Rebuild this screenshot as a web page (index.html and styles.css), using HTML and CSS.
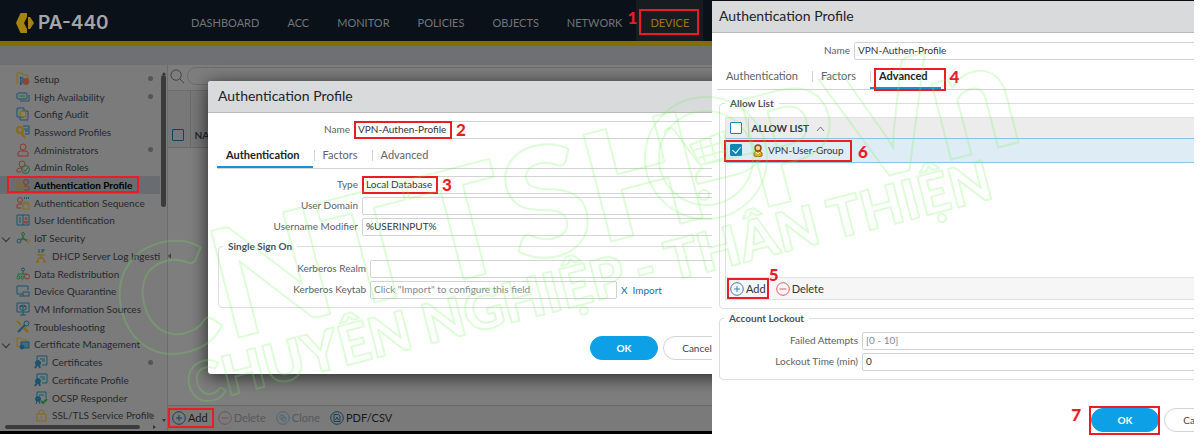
FILE: index.html
```html
<!DOCTYPE html>
<html lang="en">
<head>
  <meta charset="UTF-8" />
  <meta name="viewport" content="width=device-width, initial-scale=1.0"/>
  <title>PA-440 - Authentication Profile</title>
  <link rel="stylesheet" href="styles.css">
</head>
<body>
  <svg class="sprite" aria-hidden="true">
    <symbol id="i-setup" viewBox="0 0 14 14"><path d="M1 12V1h5l1 2h5v4" stroke="#8a6a14"/><path d="M4 12l1-4-1-3 3 1v3l-2 4z" stroke="#1b5470" fill="#3e7390"/><circle cx="10" cy="9.500" r="3" fill="#8d4636" stroke="#8d4636"/></symbol>
    <symbol id="i-ha" viewBox="0 0 14 14"><rect x="1" y="3" width="10" height="6" rx="1" stroke="#1b5470"/><path d="M4 11h9V5" stroke="#1b5470"/><path d="M3 6h6" stroke="#2c6e3c"/></symbol>
    <symbol id="i-audit" viewBox="0 0 14 14"><path d="M1 1h7v9H1zM6 4h6v9H4v-3" stroke="#1b5470"/><circle cx="7" cy="7" r="3" fill="#858270" stroke="#8a6a14"/><path d="M9 9l4 4" stroke="#8a6a14"/></symbol>
    <symbol id="i-pass" viewBox="0 0 14 14"><circle cx="4" cy="5" r="3" stroke="#8a6a14" stroke-width="2"/><path d="M5 8l4 5M8 9l-2 2" stroke="#8a6a14" stroke-width="2"/><path d="M7 1h6v8H9M8 4h4M9 6h3" stroke="#1b5470"/></symbol>
    <symbol id="i-admin" viewBox="0 0 14 14"><circle cx="7" cy="4" r="3" stroke="#8b3a2c"/><path d="M2 13v-3q0-2 3-2h4q3 0 3 2v3z" stroke="#8b3a2c"/></symbol>
    <symbol id="i-roles" viewBox="0 0 14 14"><circle cx="6" cy="4" r="3" stroke="#8b3a2c"/><path d="M1 12v-2q0-2 3-2h3" stroke="#8b3a2c"/><path d="M1 12h4" stroke="#8b3a2c"/><circle cx="9.500" cy="9.500" r="4" stroke="#1f6a38"/><path d="M7.500 9.500l1.500 2 3-4" stroke="#1f6a38"/></symbol>
    <symbol id="i-auth" viewBox="0 0 14 14"><rect x="1" y="6" width="6" height="6" stroke="#8a6a14"/><path d="M2 6V3h4v3M4 8v2" stroke="#8a6a14"/><circle cx="10" cy="4" r="2.500" stroke="#8b3a2c"/><path d="M8 8h3q2 0 2 2v2H8" stroke="#8b3a2c"/></symbol>
    <symbol id="i-seq" viewBox="0 0 14 14"><circle cx="4" cy="4" r="2.500" stroke="#8b3a2c"/><path d="M1 12V9l2-1h3M1 12h4" stroke="#8b3a2c"/><rect x="7" y="8" width="6" height="5" stroke="#8a6a14"/><path d="M8 8V6h4v2" stroke="#8a6a14"/><path d="M8 2h1M10 2h1M12 2h1" stroke="#1b5470" stroke-width="2"/></symbol>
    <symbol id="i-userid" viewBox="0 0 14 14"><path d="M1 2h12v10H1zM7 2v10M3 5h2M3 7h2M3 9h2" stroke="#1b5470"/><circle cx="10" cy="5.500" r="1" stroke="#8b3a2c"/><path d="M8.500 10V8.500h3V10z" stroke="#8b3a2c"/></symbol>
    <symbol id="i-iot" viewBox="0 0 14 14"><circle cx="7" cy="3" r="1.500" stroke="#1f6a38"/><circle cx="3" cy="10" r="2" stroke="#1b5470"/><circle cx="11.500" cy="10" r="1.500" stroke="#8a6a14"/><path d="M7 4.500v3L4 9M7 7.500l4 2" stroke="#1f6a38" stroke-width="1.500"/></symbol>
    <symbol id="i-dhcp" viewBox="0 0 14 14"><path d="M5 0v4M8 4V0h2v2H8" stroke="#1b5470"/><path d="M3 6h8M7 6v3M4 9h6M5 9l-2 4M9 9l2 4M2 13h3M9 13h3" stroke="#8a6a14" stroke-width="1.500"/></symbol>
    <symbol id="i-data" viewBox="0 0 14 14"><circle cx="7" cy="2.500" r="1.500" stroke="#1b5470"/><path d="M7 4v3M2 9V7h9" stroke="#1f6a38"/><circle cx="2.500" cy="10.500" r="1.500" stroke="#1f6a38"/><circle cx="6.500" cy="10.500" r="1.500" stroke="#1f6a38"/><circle cx="11" cy="9.500" r="2.500" stroke="#8b3a2c"/></symbol>
    <symbol id="i-quar" viewBox="0 0 14 14"><path d="M12 6V2H1v8h6M3 12h4" stroke="#1b5470"/><rect x="7" y="8" width="6" height="4" stroke="#1b5470"/></symbol>
    <symbol id="i-vm" viewBox="0 0 14 14"><path d="M1 1h12v9H1zM4 13h6M7 10v3" stroke="#1b5470"/><path d="M7 3l3 1v3L7 9 4 7V4zM4 4l3 1 3-1M7 5v4" stroke="#1b5470"/></symbol>
    <symbol id="i-trouble" viewBox="0 0 14 14"><path d="M2 12l7-7" stroke="#1b5470" stroke-width="2"/><circle cx="10.500" cy="3.500" r="2.500" stroke="#1b5470"/><path d="M1 1l4 4" stroke="#8a6a14" stroke-width="2"/><path d="M8 8l4 4" stroke="#8a6a14" stroke-width="3"/></symbol>
    <symbol id="i-certs" viewBox="0 0 14 14"><path d="M4 10H1V1h4l1 2h5v2" stroke="#8a6a14"/><rect x="5" y="5" width="8" height="6" stroke="#1b5470" fill="#3e6c84"/><circle cx="6" cy="10" r="2" fill="#1b5470" stroke="#1b5470"/></symbol>
    <symbol id="i-cert" viewBox="0 0 14 14"><path d="M3 6V1h10v9H8M6 4h5M8 6h3" stroke="#1b5470"/><circle cx="4" cy="8" r="2.500" fill="#1b5470" stroke="#1b5470"/><path d="M3 10l-2 3M5 10l1 3" stroke="#1b5470" stroke-width="2"/></symbol>
    <symbol id="i-ocsp" viewBox="0 0 14 14"><path d="M3 6V1h9v6M5 4h5" stroke="#1b5470"/><circle cx="4" cy="8" r="2.500" fill="#1b5470" stroke="#1b5470"/><path d="M3 10l-1 3M5 10l1 3" stroke="#1b5470"/><path d="M7 10l2 2 4-4" stroke="#1f6a38" stroke-width="2"/></symbol>
    <symbol id="i-lock" viewBox="0 0 14 14"><rect x="3" y="6" width="9" height="7" stroke="#8a6a14"/><path d="M5 6V4q0-2 2.500-2T10 4v2M7.500 8.500v2" stroke="#8a6a14"/></symbol>
    <symbol id="i-add" viewBox="0 0 14 14"><circle cx="7" cy="7" r="6.300"/><path d="M7 4v6M4 7h6"/></symbol>
    <symbol id="i-minus" viewBox="0 0 14 14"><circle cx="7" cy="7" r="6.300"/><path d="M3.500 7h7"/></symbol>
    <symbol id="i-clone" viewBox="0 0 14 14"><circle cx="7" cy="7" r="6.300"/><rect x="4" y="4" width="4" height="4" rx="1"/><rect x="6" y="6" width="4" height="4" rx="1"/></symbol>
    <symbol id="i-pdf" viewBox="0 0 14 14"><circle cx="7" cy="7" r="6.300"/><path d="M4 3.500h4.500L10 5v5.500H4zM5.500 9l1.500-3 1.500 3"/></symbol>
  </svg>

  <div class="page">
    <!-- device console -->
    <section class="console">
      <header class="topbar">
        <svg class="logo" viewBox="0 0 18 20"><path d="M4.500 0H11v4l-3 6 3 6v4H4.500L0 10z" fill="#a58509"/><path d="M12 4h2l4 6-4 6h-2z" fill="#a58509"/></svg>
        <span class="model">PA-440</span>
        <nav class="topnav">
          <a href="#">DASHBOARD</a>
          <a href="#">ACC</a>
          <a href="#">MONITOR</a>
          <a href="#">POLICIES</a>
          <a href="#">OBJECTS</a>
          <a href="#">NETWORK</a>
          <a href="#" class="active">DEVICE<span class="mark mark-device"><b>1</b></span></a>
        </nav>
      </header>
      <div class="strip"></div>
      <div class="workspace">
        <aside class="sidebar">
          <div class="tree-wrap">
            <ul class="tree">
              <li><svg><use href="#i-setup"/></svg>Setup<i class="dot"></i></li>
              <li><svg><use href="#i-ha"/></svg>High Availability<i class="dot"></i></li>
              <li><svg><use href="#i-audit"/></svg>Config Audit</li>
              <li><svg><use href="#i-pass"/></svg>Password Profiles</li>
              <li><svg><use href="#i-admin"/></svg>Administrators<i class="dot"></i></li>
              <li><svg><use href="#i-roles"/></svg>Admin Roles</li>
              <li class="selected"><svg><use href="#i-auth"/></svg>Authentication Profile<span class="mark mark-tree"></span></li>
              <li><svg><use href="#i-seq"/></svg>Authentication Sequence</li>
              <li><svg><use href="#i-userid"/></svg>User Identification</li>
              <li class="open"><svg><use href="#i-iot"/></svg>IoT Security</li>
              <li class="child"><svg><use href="#i-dhcp"/></svg>DHCP Server Log Ingestion</li>
              <li><svg><use href="#i-data"/></svg>Data Redistribution</li>
              <li><svg><use href="#i-quar"/></svg>Device Quarantine</li>
              <li><svg><use href="#i-vm"/></svg>VM Information Sources</li>
              <li><svg><use href="#i-trouble"/></svg>Troubleshooting</li>
              <li class="open"><svg><use href="#i-certs"/></svg>Certificate Management</li>
              <li class="child"><svg><use href="#i-cert"/></svg>Certificates<i class="dot"></i></li>
              <li class="child"><svg><use href="#i-cert"/></svg>Certificate Profile</li>
              <li class="child"><svg><use href="#i-ocsp"/></svg>OCSP Responder</li>
              <li class="child"><svg><use href="#i-lock"/></svg>SSL/TLS Service Profile<i class="dot"></i></li>
            </ul>
            <div class="vscroll"><span class="arrow up"></span><span class="thumb"></span><span class="arrow down"></span></div>
          </div>
          <div class="hscroll"><span class="thumb"></span><span class="arrow right"></span></div>
        </aside>
        <main class="content">
          <div class="search">
            <svg viewBox="0 0 16 16"><circle cx="6.500" cy="6.500" r="5.500"/><path d="M10.500 10.500L15 15"/></svg>
            <input type="text" aria-label="Search">
          </div>
          <table class="profiles">
            <thead><tr><th class="pick"><input type="checkbox" class="check" aria-label="Select all profiles"></th><th>NAME</th></tr></thead>
          </table>
          <span class="splitter"></span>
          <div class="actions">
            <button class="tool"><svg class="blue"><use href="#i-add"/></svg>Add<span class="mark mark-add"></span></button>
            <button class="tool" disabled><svg class="red"><use href="#i-minus"/></svg>Delete</button>
            <button class="tool" disabled><svg class="blue"><use href="#i-clone"/></svg>Clone</button>
            <button class="tool"><svg class="blue"><use href="#i-pdf"/></svg>PDF/CSV</button>
          </div>
        </main>
      </div>

      <div class="dialog floating">
        <h2>Authentication Profile</h2>
        <div class="dialog-body">
          <div class="row row-name">
            <label for="name-a">Name</label>
            <div class="field"><input type="text" id="name-a" value="VPN-Authen-Profile"><span class="mark mark-name"><b>2</b></span></div>
          </div>
          <div class="tabs">
            <button class="tab active">Authentication</button>
            <button class="tab">Factors</button>
            <button class="tab">Advanced</button>
          </div>
          <div class="rows">
            <div class="row">
              <label for="type">Type</label>
              <div class="field"><input type="text" id="type" value="Local Database"><span class="mark mark-type"><b>3</b></span></div>
            </div>
            <div class="row">
              <label for="domain">User Domain</label>
              <div class="field"><input type="text" id="domain"></div>
            </div>
            <div class="row">
              <label for="modifier">Username Modifier</label>
              <div class="field"><input type="text" id="modifier" value="%USERINPUT%"></div>
            </div>
          </div>
          <fieldset class="sso">
            <legend>Single Sign On</legend>
            <div class="rows">
              <div class="row">
                <label for="realm">Kerberos Realm</label>
                <div class="field"><input type="text" id="realm"></div>
              </div>
              <div class="row">
                <label for="keytab">Kerberos Keytab</label>
                <div class="field keytab"><input type="text" id="keytab" placeholder="Click &quot;Import&quot; to configure this field"></div>
                <div class="links"><a href="#">X</a><a href="#">Import</a></div>
              </div>
            </div>
          </fieldset>
          <div class="footer">
            <button class="btn primary">OK</button>
            <button class="btn">Cancel</button>
          </div>
        </div>
      </div>
    </section>

    <!-- advanced tab -->
    <section class="advanced">
      <div class="dialog">
        <h2>Authentication Profile</h2>
        <div class="dialog-body">
          <div class="row row-name">
            <label for="name-b">Name</label>
            <div class="field"><input type="text" id="name-b" value="VPN-Authen-Profile"></div>
          </div>
          <div class="tabs">
            <button class="tab">Authentication</button>
            <button class="tab">Factors</button>
            <button class="tab active">Advanced<span class="mark mark-advanced"><b>4</b></span></button>
          </div>
          <fieldset class="allow">
            <legend>Allow List</legend>
            <div class="grid-box">
              <table>
                <thead>
                  <tr><th class="pick"><input type="checkbox" class="check" aria-label="Select all"></th><th>ALLOW LIST <svg class="sort" viewBox="0 0 9 6"><path d="M1 5l3.500-4L8 5"/></svg></th></tr>
                </thead>
                <tbody>
                  <tr>
                    <td class="pick"><input type="checkbox" class="check" id="group" checked><span class="mark mark-group"><b>6</b></span></td>
                    <td><label for="group"><svg class="user" viewBox="0 0 10 13"><path d="M1 12q-1-4 2-5h4q3 1 2 5-4 1.500-8 0z" fill="#eda52a" stroke="#a9640d"/><circle cx="5" cy="4" r="3" fill="#f6cf91" stroke="#84500f" stroke-width="1.500"/><path d="M3 8l2 2 2-2" stroke="#fff" fill="none"/></svg>VPN-User-Group</label></td>
                  </tr>
                </tbody>
              </table>
              <div class="grid-actions">
                <button class="tool"><svg class="blue"><use href="#i-add"/></svg>Add<span class="mark mark-add-group"><b>5</b></span></button>
                <button class="tool"><svg class="red"><use href="#i-minus"/></svg>Delete</button>
              </div>
            </div>
          </fieldset>
          <fieldset class="lockout">
            <legend>Account Lockout</legend>
            <div class="rows">
              <div class="row">
                <label for="attempts">Failed Attempts</label>
                <div class="field"><input type="text" id="attempts" placeholder="[0 - 10]"></div>
              </div>
              <div class="row">
                <label for="locktime">Lockout Time (min)</label>
                <div class="field"><input type="text" id="locktime" value="0"></div>
              </div>
            </div>
          </fieldset>
          <div class="footer">
            <button class="btn primary">OK<span class="mark mark-ok"><b>7</b></span></button>
            <button class="btn">Cancel</button>
          </div>
        </div>
      </div>
    </section>

    <!-- watermark -->
    <svg class="watermark" viewBox="0 0 1200 438" aria-hidden="true">
      <g transform="translate(160 360) rotate(-14.500)">
        <text class="wm-big" x="-30" y="-2">CNTTSH</text>
        <text class="wm-big" x="616" y="4">PVn</text>
        <text class="wm-small" x="20" y="52">CHUYÊN NGHIỆP - THÂN THIỆN</text>
      </g>
      <circle cx="706" cy="158" r="61"/>
      <circle cx="706" cy="158" r="47"/>
      <path d="M664 133q4-8 10-3l28 38q-10 8-4 16l40-10q14-4 22-14l-4-8-50 12M690 145l34-14 4 26-28 8zM694 150l30-8M698 158l30-8M700 142l5 20M710 138l5 20M719 134l5 20"/>
      <circle cx="704" cy="195" r="5"/>
    </svg>
  </div>
</body>
</html>
```
FILE: styles.css
```css
* {
  box-sizing: border-box;
}

body {
  margin: 0;
  background-color: #fff;
  color: #30363c;
  font-family: Lato, 'Open Sans', sans-serif;
  font-size: 10px;
  line-height: 12px;
}

button, input {
  font: inherit;
  color: inherit;
}

button {
  background: none;
  border: none;
  padding: 0;
}

a {
  text-decoration: none;
}

svg {
  fill: none;
  flex: none;
}

.sprite {
  position: absolute;
  width: 0;
  height: 0;
}

.page {
  position: relative;
  display: grid;
  grid-template-columns: 712fr 482fr;
  min-height: 100vh;
  padding-right: 6px;
  overflow: hidden;
}

/* console */
.console {
  position: relative;
  display: flex;
  flex-direction: column;
  margin-bottom: 4px;
  border-bottom: 3px solid #000;
  background-color: #7e7e7e;
  overflow: hidden;
}

.topbar {
  display: flex;
  align-items: center;
  height: 46px;
  padding-left: 16px;
  background-color: #0b1119;
  border-bottom: 5px solid #8a6b00;
}

.logo {
  width: 18px;
  height: 20px;
  margin-top: 4px;
}

.model {
  width: 125px;
  margin: 4px 0 0 4px;
  font: 600 19px/20px Inter, sans-serif;
  color: #a3a5a8;
}

.topnav {
  display: flex;
  align-self: stretch;
  margin-left: 14px;
  font-size: 11px;
}

.topnav a {
  position: relative;
  padding: 17px 14px 0;
  color: #70757b;
}

.topnav .active {
  background-color: #171c21;
  color: #a07608;
}

.strip {
  height: 19px;
  background-color: #6e7073;
}

.workspace {
  flex: 1;
  display: grid;
  grid-template-columns: 168px 1fr;
}

.sidebar {
  display: flex;
  flex-direction: column;
  border-right: 1px solid #6c6c6c;
  background-color: #7b7b7b;
  color: #24292e;
  min-width: 0;
}

.tree-wrap {
  flex: 1;
  display: flex;
  padding-top: 5px;
}

.tree {
  flex: 1;
  display: flex;
  flex-direction: column;
  margin: 0;
  padding: 0;
  list-style: none;
  min-width: 0;
}

.tree li {
  flex: 1;
  position: relative;
  display: flex;
  align-items: center;
  gap: 4px;
  padding-left: 16px;
  white-space: nowrap;
}

.tree svg {
  width: 14px;
  height: 14px;
}

.tree .child {
  padding-left: 34px;
  overflow: hidden;
}

.tree .selected {
  background-color: #696c70;
  color: #000;
  font-weight: 700;
}

.open::before {
  content: '';
  position: absolute;
  left: 3px;
  width: 5px;
  height: 5px;
  border: solid #333;
  border-width: 0 1px 1px 0;
  transform: rotate(45deg);
}

.dot {
  position: absolute;
  right: 7px;
  width: 5px;
  height: 5px;
  border-radius: 50%;
  background-color: #555;
}

.vscroll {
  width: 7px;
  display: flex;
  flex-direction: column;
  align-items: center;
}

.vscroll .thumb {
  width: 5px;
  height: 132px;
  margin-bottom: auto;
  border-radius: 3px;
  background-color: #3b3b3b;
}

.hscroll {
  display: flex;
  align-items: center;
  justify-content: space-between;
  height: 7px;
  padding: 0 9px 2px 5px;
}

.hscroll .thumb {
  width: 135px;
  height: 4px;
  border-radius: 2px;
  background-color: #3b3b3b;
}

.arrow {
  border: 2px solid transparent;
}

.up {
  border-bottom: 3px solid #333;
}

.down {
  border-top: 3px solid #333;
}

.right {
  border-left: 3px solid #333;
}

.content {
  position: relative;
  display: flex;
  flex-direction: column;
}

.search {
  display: flex;
  align-items: center;
  gap: 2px;
  height: 26px;
  margin-right: -20px;
  padding: 0 0 3px 2px;
  border-bottom: 1px solid #6c6c6c;
}

.search svg {
  width: 15px;
  height: 15px;
  stroke: #3d4043;
}

.search input {
  flex: 1;
  height: 18px;
  border: 1px solid #6c6c6c;
  border-radius: 9px;
  background-color: #7e7e7e;
}

.profiles {
  border-collapse: collapse;
  width: 100%;
  color: #24292e;
}

.profiles th {
  height: 56px;
  padding: 0 5px 6px 4px;
  border-bottom: 1px solid #6a6a6a;
  background-color: #787878;
  text-align: left;
  vertical-align: bottom;
}

.profiles .pick {
  width: 22px;
  padding-left: 4px;
  border-right: 1px solid #6a6a6a;
}

.check {
  appearance: none;
  display: block;
  width: 12px;
  height: 12px;
  margin: 0;
  border: 1px solid #1484b4;
  border-radius: 1px;
  background-color: #fff;
}

.profiles .check {
  border-color: #0d4560;
  background-color: transparent;
}

.check:checked {
  background-color: #0f86b4;
}

.check:checked::after {
  content: '';
  display: block;
  width: 4px;
  height: 7px;
  margin: 0 0 0 3px;
  border: solid #fff;
  border-width: 0 1px 1px 0;
  transform: rotate(40deg);
}

.splitter {
  position: absolute;
  left: 0;
  top: 188px;
  border: 3px solid transparent;
  border-right-color: #444;
  border-left: none;
}

.actions, .grid-actions {
  display: flex;
  align-items: center;
}

.actions {
  gap: 10px;
  height: 26px;
  margin-top: auto;
  padding: 0 0 2px 4px;
  border-top: 1px solid #686868;
  background-color: #7a7a7a;
}

.tool {
  position: relative;
  display: flex;
  align-items: center;
  gap: 2px;
  font-size: 11px;
  line-height: 14px;
}

.tool svg {
  width: 14px;
  height: 14px;
}

.actions .tool {
  color: #16191c;
}

.actions .tool:disabled {
  color: #56595b;
}

.blue {
  stroke: #3c87ad;
}

.red {
  stroke: #d8606a;
}

.actions .blue {
  stroke: #163f57;
}

.actions :disabled .blue {
  stroke: #4e6675;
}

.actions :disabled .red {
  stroke: #705657;
}

/* dialogs */
.dialog {
  background-color: #fff;
}

.floating {
  position: absolute;
  left: 208px;
  right: -29px;
  top: 81px;
  border-radius: 3px;
  box-shadow: 0 3px 18px rgba(0, 0, 0, 0.7);
}

.dialog h2 {
  height: 32px;
  margin: 0;
  padding: 0 10px;
  border-bottom: 1px solid #b8b9bb;
  border-radius: 3px 3px 0 0;
  background-color: #d9dadc;
  font-size: 14px;
  font-weight: 400;
  line-height: 30px;
  color: #202428;
}

.dialog-body {
  padding: 8px 10px 14px 9px;
}

.row {
  display: flex;
  align-items: center;
  gap: 4px;
}

.rows {
  display: flex;
  flex-direction: column;
  gap: 3px;
}

.row label {
  width: 141px;
  padding-bottom: 2px;
  text-align: right;
  color: #5b6167;
}

.row-name label {
  width: 133px;
}

.field {
  position: relative;
  flex: 1;
}

.field input {
  display: block;
  width: 100%;
  height: 18px;
  padding: 0 3px 2px;
  border: 1px solid #d2d3d5;
  border-radius: 2px;
  background-color: #fff;
}

.field input::placeholder {
  color: #85898d;
}

.tabs {
  display: flex;
  margin: 5px 0 7px;
  border-bottom: 1px solid #d2d3d5;
}

.tab {
  position: relative;
  height: 24px;
  padding: 0 13px 2px 9px;
  font-size: 11px;
  color: #5e6369;
}

.tab.active {
  border-bottom: 2px solid #1692cf;
  padding-bottom: 0;
  font-weight: 700;
  color: #202428;
}

.tab:not(:last-child) {
  margin-right: 1px;
}

.tab:not(:first-child)::before {
  content: '';
  position: absolute;
  left: 0;
  top: 6px;
  height: 11px;
  border-left: 1px solid #d2d3d5;
}

fieldset {
  min-width: 0;
  margin: 4px 0 0 1px;
  padding: 8px 6px 8px 0;
  border: 1px solid #dcdddf;
  border-radius: 4px;
}

legend {
  margin-left: 4px;
  padding: 0 5px;
  font-weight: 700;
  line-height: 12px;
  color: #46535f;
}

.sso label {
  width: 147px;
}

.keytab {
  flex: none;
  width: 247px;
}

.links {
  display: flex;
  gap: 5px;
}

.links a {
  color: #1470b0;
}

.footer {
  display: flex;
  justify-content: flex-end;
  gap: 5px;
  padding-top: 28px;
}

.btn {
  position: relative;
  width: 68px;
  height: 24px;
  border: 1px solid #d2d3d5;
  border-radius: 12px;
  background-color: #fff;
  color: #40464c;
}

.btn.primary {
  border-color: #0ea0e6;
  background-color: #0ea0e6;
  color: #fff;
  font-weight: 700;
}

/* advanced panel */
.advanced {
  border-top: 1px solid #0b0d14;
  overflow: hidden;
}

.advanced .dialog {
  margin-right: -48px;
}

.advanced h2 {
  padding: 0 7px;
  border-radius: 0;
}

.advanced .dialog-body {
  padding: 9px 10px 0 5px;
}

.advanced fieldset {
  margin: 0 0 0 2px;
}

.advanced .lockout {
  margin-top: 3px;
}

.advanced .allow {
  padding-left: 5px;
}

.allow legend {
  margin-left: 0;
}

.lockout label {
  width: 138px;
}

.grid-box {
  display: flex;
  flex-direction: column;
  min-height: 183px;
  border: 1px solid #dfe0e1;
}

.grid-box table {
  width: 100%;
  border-collapse: collapse;
}

.grid-box th {
  height: 20px;
  padding: 0 3px;
  background-color: #ececec;
  text-align: left;
}

.grid-box th.pick {
  border-right: 1px solid #cfd0d1;
}

.grid-box td {
  height: 24px;
  padding: 0 6px 0 5px;
  border: solid #8cc4e0;
  border-width: 1px 0;
  background-color: #deecf5;
}

.grid-box .pick {
  position: relative;
  width: 22px;
  padding: 0 4px;
}

.grid-box label {
  display: flex;
  align-items: center;
  gap: 5px;
}

.user {
  width: 10px;
  height: 13px;
}

.sort {
  width: 9px;
  height: 6px;
  margin-left: 5px;
  stroke: #777;
}

.grid-actions {
  gap: 10px;
  height: 22px;
  margin-top: auto;
  padding-left: 4px;
  border-top: 1px solid #e4e4e4;
  background-color: #f6f6f6;
}

/* step marks drawn over the controls */
.mark {
  position: absolute;
  border: 2px solid #ec1c24;
}

.mark b {
  position: absolute;
  top: -2px;
  left: 100%;
  margin-left: 6px;
  font-size: 17px;
  font-weight: 900;
  line-height: 18px;
  color: #ec1c24;
}

.mark-device {
  inset: 9px 4px 6px 3px;
}

.mark-device b {
  left: auto;
  right: 100%;
  margin: 0 4px 0 0;
}

.mark-tree {
  left: 7px;
  top: 0;
  width: 132px;
  height: 17px;
}

.mark-add {
  inset: -3px -6px -3px -4px;
}

.mark-name {
  left: 0;
  top: 0;
  width: 98px;
  height: 18px;
}

.mark-type {
  left: 0;
  top: 0;
  width: 76px;
  height: 18px;
}

.mark-advanced {
  inset: 3px -5px -4px 4px;
}

.mark-group {
  left: -2px;
  top: 1px;
  width: 128px;
  height: 22px;
}

.mark-group b {
  top: 1px;
  margin-left: 8px;
}

.mark-add-group {
  inset: -4px -3px -3px -3px;
}

.mark-add-group b {
  top: -14px;
  margin-left: 2px;
}

.mark-ok {
  inset: -3px -2px -4px -3px;
}

.mark-ok b {
  left: auto;
  right: 100%;
  margin: 0 10px 0 0;
}

/* watermark */
.watermark {
  position: absolute;
  inset: 0;
  width: 100%;
  height: 100%;
  stroke: rgba(110, 240, 80, 0.22);
  stroke-width: 2;
  stroke-linejoin: round;
  pointer-events: none;
}

.wm-big {
  font-size: 152px;
  font-weight: 900;
}

.wm-small {
  font-size: 55px;
  font-weight: 900;
}
```
